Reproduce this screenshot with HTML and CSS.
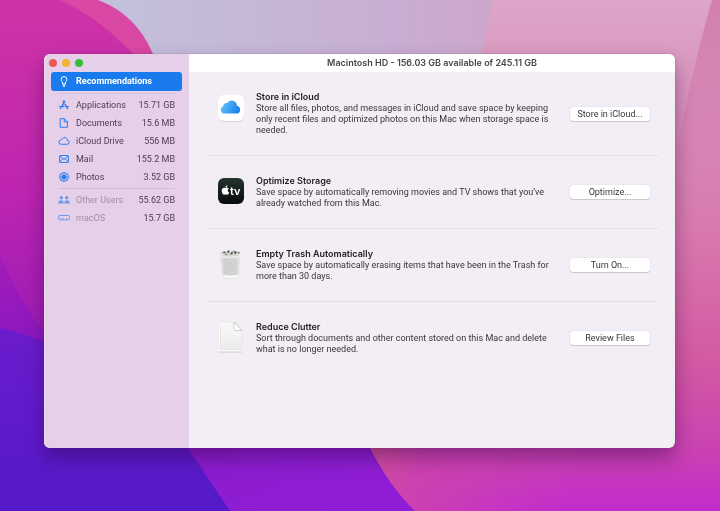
FILE: index.html
```html
<!DOCTYPE html>
<html lang="en">
<head>
<meta charset="utf-8">
<title>Storage Management</title>
<link rel="stylesheet" href="styles.css">
</head>
<body>
<svg class="wallpaper" viewBox="0 0 720 511" preserveAspectRatio="none" aria-hidden="true">
  <defs>
    <linearGradient id="sky" x1="0" y1="0" x2="1" y2="0"><stop offset="0.15" stop-color="#c3c0dc"/><stop offset="0.55" stop-color="#c8aed2"/><stop offset="0.9" stop-color="#d49bc0"/></linearGradient>
    <linearGradient id="rose" x1="0" y1="0" x2="0" y2="1"><stop offset="0" stop-color="#dca6c8"/><stop offset="0.45" stop-color="#d879ae"/><stop offset="0.7" stop-color="#d45aa2"/><stop offset="0.88" stop-color="#ca42b2"/><stop offset="1" stop-color="#c22ccc"/></linearGradient>
    <linearGradient id="edge" x1="0" y1="0" x2="0" y2="1"><stop offset="0" stop-color="#d27fae"/><stop offset="1" stop-color="#d879ae" stop-opacity="0"/></linearGradient>
    <linearGradient id="magenta" x1="0" y1="0" x2="0" y2="1"><stop offset="0" stop-color="#d033a6"/><stop offset="0.5" stop-color="#bd25b0"/><stop offset="1" stop-color="#9319b8"/></linearGradient>
    <linearGradient id="plum" x1="0" y1="0" x2="0" y2="1"><stop offset="0" stop-color="#a41cb8"/><stop offset="1" stop-color="#8b18c0"/></linearGradient>
    <linearGradient id="indigo" x1="0" y1="0" x2="0" y2="1"><stop offset="0" stop-color="#6c1ccd"/><stop offset="1" stop-color="#5419c8"/></linearGradient>
    <linearGradient id="violet" x1="0" y1="0" x2="1" y2="1"><stop offset="0" stop-color="#8a1bc8"/><stop offset="1" stop-color="#901ed8"/></linearGradient>
    <linearGradient id="bloom" x1="0" y1="0" x2="1" y2="0.2"><stop offset="0.05" stop-color="#d8588e"/><stop offset="0.4" stop-color="#cc42b0"/><stop offset="1" stop-color="#ca42b2" stop-opacity="0"/></linearGradient>
  </defs>
  <rect width="720" height="511" fill="url(#sky)"/>
  <path d="M493 0H720V511H300V400H420Q450 200 493 0Z" fill="url(#rose)"/>
  <path d="M712 0H720V260H660Q680 110 712 0Z" fill="url(#edge)"/>
  <path d="M340 420H600V511H340Z" fill="url(#bloom)"/>
  <path d="M0 0H98Q136 14 153 54L200 350H0Z" fill="#da48a5"/>
  <path d="M0 0H60Q100 18 135 56L200 380H0Z" fill="url(#magenta)"/>
  <path d="M0 254Q18 300 54 346H0Z" fill="url(#plum)"/>
  <path d="M150 400H347L370 448Q390 487 415 511H150Z" fill="url(#violet)"/>
  <path d="M0 328Q26 334 50 344Q150 380 188 448L230 511H0Z" fill="url(#indigo)"/>
</svg>

<main class="window">
  <aside class="sidebar">
    <div class="lights">
      <button class="light close" aria-label="Close"></button>
      <button class="light minimize" aria-label="Minimize"></button>
      <button class="light maximize" aria-label="Zoom"></button>
    </div>
    <nav>
      <a class="item selected" href="#recommendations">
        <svg class="glyph" viewBox="0 0 12 12"><path d="M4.700 7.500C4.700 6 3.200 5.200 3.200 3.400a2.800 2.800 0 0 1 5.600 0c0 1.800-1.500 2.600-1.500 4.100zM4.800 9h2.400M5.300 10.200h1.400"/></svg>
        <span class="name">Recommendations</span>
      </a>
      <div class="group">
        <a class="item" href="#applications">
          <svg class="glyph" viewBox="0 0 12 12"><path class="bold" d="M5.300 2.200L6.200 3.800M6.700 2.200L3.700 7.600M1.700 7.600h4.300M7.100 5.300l2.400 4.200M8 7.600h2.300M2.700 9.200l-.2.300"/></svg>
          <span class="name">Applications</span><span class="size">15.71 GB</span>
        </a>
        <a class="item" href="#documents">
          <svg class="glyph" viewBox="0 0 12 12"><path d="M2.600 1.700h3.700L9.400 4.800v5.500H2.600zM6.200 1.700v3.200h3.200"/></svg>
          <span class="name">Documents</span><span class="size">15.6 MB</span>
        </a>
        <a class="item" href="#icloud">
          <svg class="glyph" viewBox="0 0 12 12"><path d="M3 9.300a2 2 0 0 1-.4-4A1.700 1.700 0 0 1 4.300 4a2.700 2.700 0 0 1 5.100 1.500 1.900 1.900 0 0 1-.2 3.800z"/></svg>
          <span class="name">iCloud Drive</span><span class="size">556 MB</span>
        </a>
        <a class="item" href="#mail">
          <svg class="glyph" viewBox="0 0 12 12"><rect x="1.500" y="2.500" width="9" height="7" rx="1"/><path d="M2 3l4 3.600L10 3M2 9l2.700-3.500M10 9L7.300 5.500"/></svg>
          <span class="name">Mail</span><span class="size">155.2 MB</span>
        </a>
        <a class="item" href="#photos">
          <svg class="glyph" viewBox="0 0 12 12"><circle cx="6" cy="6" r="4.400" stroke-dasharray="2.500 .9"/><circle class="solid" cx="6" cy="6" r="2.500"/><path d="M6 2v8M2 6h8M3 3l6 6M9 3l-6 6" stroke-width=".7"/></svg>
          <span class="name">Photos</span><span class="size">3.52 GB</span>
        </a>
      </div>
      <div class="group">
        <div class="item disabled">
          <svg class="glyph" viewBox="0 0 12 12"><g class="solid"><circle cx="3.300" cy="3.700" r="1.700"/><circle cx="8.700" cy="3.700" r="1.700"/><path d="M.2 9.500c0-4.500 5.600-4.500 5.600 0zM6.200 9.500c0-4.500 5.600-4.500 5.600 0z"/></g></svg>
          <span class="name">Other Users</span><span class="size">55.62 GB</span>
        </div>
        <div class="item disabled">
          <svg class="glyph" viewBox="0 0 12 12"><rect x=".6" y="3.500" width="10.800" height="4.300" rx="1.200"/><path d="M3 6.300h.1M5 6.300h.1M8.800 6.300h.1"/></svg>
          <span class="name">macOS</span><span class="size">15.7 GB</span>
        </div>
      </div>
    </nav>
  </aside>

  <section class="content">
    <header class="titlebar"><h1>Macintosh HD - 156.03 GB available of 245.11 GB</h1></header>
    <div class="list">
      <article class="row">
        <svg class="art" viewBox="0 0 28 32" aria-hidden="true">
          <defs><linearGradient id="cloud" x1="0" y1="0" x2="1" y2=".3"><stop offset="0" stop-color="#6dc8fa"/><stop offset="1" stop-color="#1c84ee"/></linearGradient></defs>
          <rect x="1" y="5" width="26" height="26" rx="6" fill="#d8d3da"/>
          <rect x="1" y="4" width="26" height="26" rx="6" fill="#fff"/>
          <path d="M7 22.500a3.800 3.800 0 0 1-.8-7.300 3.300 3.300 0 0 1 3.900-3.200 5.300 5.300 0 0 1 9.800 2.800 4 4 0 0 1 .6 7.700z" fill="url(#cloud)"/>
        </svg>
        <div class="text"><h2>Store in iCloud</h2><p>Store all files, photos, and messages in iCloud and save space by keeping only recent files and optimized photos on this Mac when storage space is needed.</p></div>
        <button class="action">Store in iCloud...</button>
      </article>
      <article class="row">
        <svg class="art" viewBox="0 0 28 32" aria-hidden="true">
          <defs><linearGradient id="tv" x1="0" y1="0" x2="0" y2="1"><stop offset="0" stop-color="#24342f"/><stop offset="1" stop-color="#080a0c"/></linearGradient></defs>
          <rect x="1" y="3" width="26" height="26" rx="6" fill="url(#tv)"/>
          <path d="M8.600 13c.6-.4 2.400-.7 3.200.6-1.600 1-1.400 3.200.4 4-.8 2-1.800 2.500-2.700 2-.6-.3-1.100-.3-1.700 0-2 1-4-3.200-2.600-5.500.8-1.300 2.100-1.500 3.400-1.100zM8.500 12.600c0-1.300.7-2.200 1.900-2.400.1 1.300-.7 2.300-1.900 2.400z" fill="#fff"/>
          <text x="13" y="20" class="tv">tv</text>
        </svg>
        <div class="text"><h2>Optimize Storage</h2><p>Save space by automatically removing movies and TV shows that you’ve already watched from this Mac.</p></div>
        <button class="action">Optimize...</button>
      </article>
      <article class="row">
        <svg class="art" viewBox="0 0 28 32" aria-hidden="true">
          <defs><linearGradient id="bin" x1="0" y1="0" x2="1" y2="0"><stop offset="0" stop-color="#e4e4e5"/><stop offset=".25" stop-color="#d0d0d1"/><stop offset=".75" stop-color="#d3d3d4"/><stop offset="1" stop-color="#ececed"/></linearGradient></defs>
          <path d="M3 4.500h21L21.800 28q-.2 2.500-3 2.500H8.400q-2.700 0-3-2.500z" fill="url(#bin)"/>
          <path d="M5.700 26.500q8 2 15.800 0l-.3 2q-.6 1.400-2.600 1.500H8.600q-2.200-.2-2.600-1.500z" fill="#f7f6f8"/>
          <path d="M3.500 6q2 2.500 10 2.500T23.500 6l-.3 3q-9.500 2.500-19.400 0z" fill="#ebebec"/>
          <path d="M4 5l2-2.500 3 1 2-2 3 1.500 3-1.500 2 2 3-1 1.500 2.500-2 2q-8 2-16 0z" fill="#d8d7d6"/>
          <path d="M5.500 4.500l2-1 1.500 2zM10 3l2.500-.5-1 3zM13 6.500l2-3 1 2.500zM17 3l3 1-2 2.500zM20.500 5l1.500-1 .5 1.500z" fill="#3f4143"/>
          <path d="M9 5.500l2 1.500-3-.3z" fill="#54855d"/><path d="M15.500 3l1.500 1-1.500.6z" fill="#b46b57"/>
          <path d="M8 12l1 13M19.500 12l-1 13M11 14l5 3-4 3 5 4" fill="none" stroke="#c8c8ca" stroke-width=".5"/>
        </svg>
        <div class="text"><h2>Empty Trash Automatically</h2><p>Save space by automatically erasing items that have been in the Trash for more than 30 days.</p></div>
        <button class="action">Turn On...</button>
      </article>
      <article class="row">
        <svg class="art" viewBox="0 0 28 32" aria-hidden="true">
          <defs><linearGradient id="page" x1="0" y1="0" x2="0" y2="1"><stop offset="0" stop-color="#fafafa"/><stop offset="1" stop-color="#ebebec"/></linearGradient></defs>
          <path d="M1.500 1.500h17l6.500 8v22H1.500z" fill="#ccc9ce"/>
          <path d="M1.500 1h16l7.500 8v21.500H1.500z" fill="#fbfbfb"/>
          <path d="M3.500 1h14l7.500 8v19.500H3.500z" fill="url(#page)" stroke="#d9d8da" stroke-width=".5"/>
          <path d="M17 1v6.500q0 2 2 2h6z" fill="#fff" stroke="#b9b8bb" stroke-width=".7"/>
        </svg>
        <div class="text"><h2>Reduce Clutter</h2><p>Sort through documents and other content stored on this Mac and delete what is no longer needed.</p></div>
        <button class="action">Review Files</button>
      </article>
    </div>
  </section>
</main>
</body>
</html>
```
FILE: styles.css
```css
* { box-sizing: border-box; }

body {
  margin: 0;
  min-height: 100vh;
  display: flex;
  padding: 54px 45px 63px 44px;
  font: 9px/11px Roboto, "Liberation Sans", sans-serif;
  color: #39353c;
}

.wallpaper {
  position: fixed;
  inset: 0;
  z-index: -1;
  width: 100%;
  height: 100%;
}

.window {
  flex: 1;
  display: flex;
  border-radius: 6px;
  overflow: hidden;
  background: #f3eef5;
  box-shadow: 0 0 1px rgba(40, 0, 50, 0.6), 0 10px 20px rgba(40, 0, 60, 0.4);
}

.sidebar {
  flex: 0 0 145px;
  padding: 0 7px 0 6px;
  background: #e6cfe8;
  border-left: 1px solid #f0dcf1;
}

.lights {
  display: flex;
  align-items: center;
  gap: 5px;
  height: 18px;
  margin-left: -2px;
}

.light {
  width: 8px;
  height: 8px;
  padding: 0;
  border: 0;
  border-radius: 50%;
}
.close { background: #ee5750; }
.minimize { background: #f3b32f; }
.maximize { background: #36bd3d; }

.item {
  display: flex;
  align-items: center;
  height: 18px;
  padding: 0 7px;
  color: #4a3f4e;
  text-decoration: none;
}

.selected {
  height: 19px;
  border-radius: 3px;
  background: #1a7bee;
  color: #fff;
  font-weight: 700;
}

.glyph {
  width: 12px;
  height: 12px;
  margin-right: 6px;
  fill: none;
  stroke: #2b7df0;
  stroke-width: 1;
  stroke-linecap: round;
  stroke-linejoin: round;
}
.glyph .bold { stroke-width: 1.4; }
.glyph .solid { fill: #2b7df0; stroke: none; }
.selected .glyph { stroke: #fff; }

.name { flex: 1; }
.disabled .name { color: #a08fa5; }
.disabled .glyph { opacity: 0.65; }

.group {
  margin-top: 2px;
  padding-top: 3px;
  position: relative;
}
.group::before {
  content: "";
  position: absolute;
  top: 0;
  left: 7px;
  right: 7px;
  height: 1px;
  background: #d5bfd8;
}

.content {
  flex: 1;
  min-width: 0;
}

.titlebar {
  height: 18px;
  background: #fff;
  text-align: center;
}
.titlebar h1 {
  margin: 0;
  font: 600 9px/18px Inter, "Liberation Sans", sans-serif;
  color: #48454a;
}

.list { padding: 0 17px 0 18px; }

.row {
  display: flex;
  align-items: center;
  padding: 19px 8px 19px 10px;
}
.row + .row { border-top: 1px solid #e3dee5; }

.art {
  flex: none;
  align-self: flex-start;
  width: 28px;
  height: 32px;
  margin-right: 11px;
}
.tv {
  font: 600 11px Inter, sans-serif;
  fill: #fff;
}

.text {
  flex: 1;
  align-self: flex-start;
}
.text h2 {
  margin: 0;
  font: 600 9px/12px Inter, "Liberation Sans", sans-serif;
  color: #242126;
}
.text p { margin: 0; }

.action {
  flex: none;
  width: 80px;
  height: 14px;
  margin-left: 16px;
  padding: 0;
  border: 0;
  border-radius: 3px;
  background: #fff;
  box-shadow: 0 0 1px rgba(0, 0, 0, 0.25), 0 1px 1px rgba(0, 0, 0, 0.15);
  font: inherit;
  line-height: 14px;
  color: #39353c;
}
```
